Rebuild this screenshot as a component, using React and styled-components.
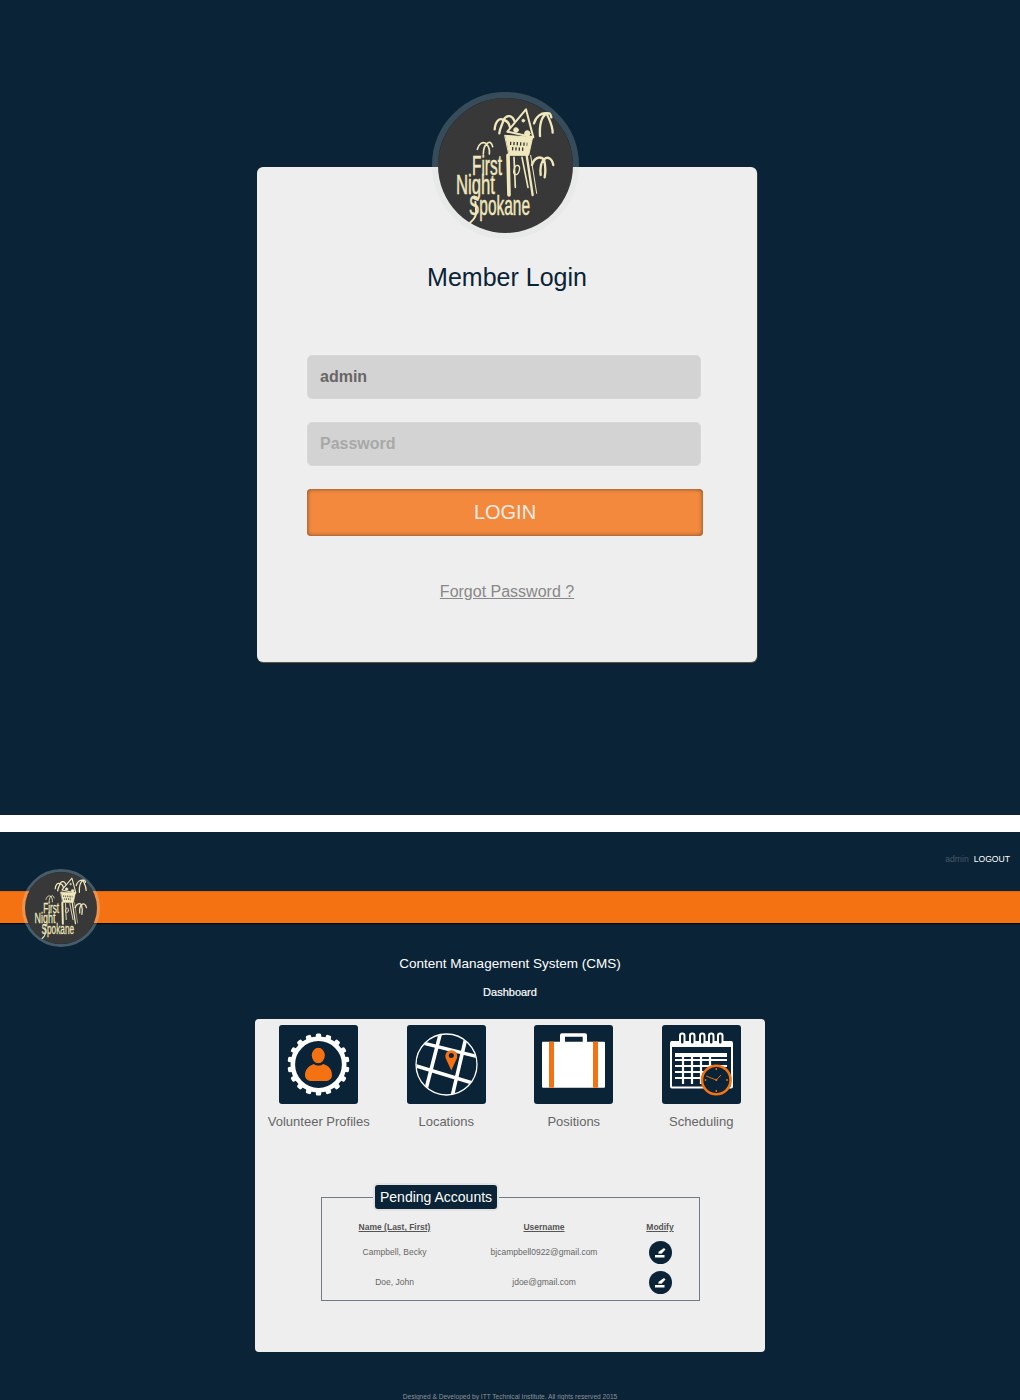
import styled, { createGlobalStyle } from 'styled-components';

const navy = '#0a2336';
const orange = '#f57212';
const cream = '#f0e8bd';

const GlobalStyle = createGlobalStyle`
  html, body {
    margin: 0;
    padding: 0;
    background: #fff;
    font-family: 'Liberation Sans', Arial, sans-serif;
  }
`;

const LogoRing = styled.div`
  position: absolute;
  left: ${(p) => p.$left}px;
  top: ${(p) => p.$top}px;
  width: ${(p) => p.$size}px;
  height: ${(p) => p.$size}px;
  border-radius: 50%;
  border: ${(p) => p.$ring}px solid rgba(215, 225, 225, ${(p) => p.$alpha});
  background-clip: padding-box;
  svg {
    display: block;
    width: 100%;
    height: 100%;
  }
`;

// drawn in the coordinates of the crop, that is why the group is scaled
const Logo = () => (
  <svg viewBox="0 0 135 135">
    <circle cx="67.5" cy="67.5" r="67.5" fill="#383838" />
    <g transform="translate(-18 -18) scale(.3333)" fill="none" stroke={cream} strokeLinecap="round" strokeLinejoin="round">
      <path d="M262 155 L318 88 L340 172 Z" strokeWidth="6" />
      <path d="M255 166 L338 172 L326 226 L268 226 Z" fill={cream} strokeWidth="3" />
      <path d="M270 190 L322 193 M276 206 L316 208" stroke="#383838" strokeWidth="10" strokeDasharray="4 6" strokeLinecap="butt" />
      <path d="M264 226 L267 345" strokeWidth="11" />
      <path d="M320 226 L338 345" strokeWidth="7" />
      <path d="M332 226 L350 340" strokeWidth="3" />
      <path d="M282 232 L286 322 M306 232 L324 322" strokeWidth="5" />
      <ellipse cx="290" cy="270" rx="8" ry="14" strokeWidth="4" transform="rotate(15 290 270)" />
      <g strokeWidth="3" fill={cream}>
        <circle cx="288" cy="150" r="7" />
        <circle cx="322" cy="160" r="8" />
        <circle cx="310" cy="122" r="4" />
      </g>
      <g strokeWidth="7">
        <path d="M250 120 C238 112 226 125 224 148 M250 120 C250 130 240 140 238 160 M250 120 C262 100 278 108 284 125 M250 120 C262 122 268 130 270 142" />
        <path d="M380 100 C365 98 348 108 342 130 M380 100 C362 112 358 135 360 168 M380 100 C388 120 398 135 398 158 M380 100 C388 98 392 100 394 112" />
        <path d="M372 238 C358 226 342 235 336 255 M372 238 C362 248 360 265 362 285 M372 238 C376 255 378 272 374 292 M372 238 C384 228 396 235 400 255" />
        <path d="M200 192 C188 182 176 192 172 208 M200 192 C190 200 190 212 190 222 M200 192 C206 200 210 210 208 222 M200 192 C208 182 215 188 218 200" strokeWidth="5" />
      </g>
      <path d="M166 366 C170 400 172 410 150 428" strokeWidth="6" />
    </g>
    <g fill={cream} stroke={cream} strokeWidth=".5" fontFamily="'Liberation Sans', sans-serif">
      <text x="34" y="77" fontSize="28" textLength="30" lengthAdjust="spacingAndGlyphs">First</text>
      <text x="18" y="96" fontSize="27" textLength="39" lengthAdjust="spacingAndGlyphs">Night</text>
      <text x="31" y="117" fontSize="28" textLength="61" lengthAdjust="spacingAndGlyphs">Spokane</text>
    </g>
  </svg>
);

const LoginScreen = styled.section`
  height: 815px;
  box-sizing: border-box;
  padding-top: 167px;
  background: ${navy};
`;

const LoginCard = styled.form`
  position: relative;
  box-sizing: border-box;
  width: 500px;
  height: 495px;
  margin-left: 257px;
  padding: 95px 0 0 50px;
  background: #eee;
  border-radius: 6px;
  box-shadow: 0.5px 1px 0 #59583f;
`;

const LoginTitle = styled.h1`
  margin: 0 0 63px -50px;
  font-size: 25px;
  line-height: 30px;
  font-weight: 400;
  text-align: center;
  color: ${navy};
`;

const TextInput = styled.input`
  display: block;
  box-sizing: border-box;
  width: 394px;
  height: 44px;
  margin-bottom: 23px;
  padding: 0 12px 1px;
  background: #d3d3d3;
  border: 1px solid #d8d8d8;
  border-radius: 5px;
  outline: none;
  font-family: 'Liberation Sans', sans-serif;
  font-size: 16px;
  font-weight: 700;
  color: #666;
  &::placeholder {
    color: #a8a8a8;
    opacity: 1;
  }
`;

const LoginButton = styled.button`
  display: block;
  box-sizing: border-box;
  width: 396px;
  height: 47px;
  padding: 0;
  background: #f2893d;
  border: none;
  border-radius: 4px;
  box-shadow: inset 0 0 4px rgba(60, 50, 40, 0.75);
  font-family: 'Liberation Sans', sans-serif;
  font-size: 20px;
  color: #f3ece4;
`;

const ForgotLink = styled.a`
  display: block;
  margin: 46px 0 0 -50px;
  font-size: 16px;
  line-height: 20px;
  text-align: center;
  text-decoration: underline;
  color: #888;
`;

const Gap = styled.div`
  height: 17px;
  background: #fff;
`;

const DashboardScreen = styled.section`
  position: relative;
  height: 568px;
  overflow: hidden;
  background: ${navy};
`;

const UserBar = styled.div`
  display: flex;
  justify-content: flex-end;
  align-items: center;
  gap: 5px;
  height: 59px;
  box-sizing: border-box;
  padding: 0 10px 5px 0;
  font-size: 8.6px;
`;

const UserName = styled.span`
  color: #48596a;
`;

const LogoutLink = styled.a`
  color: #fff;
`;

const Band = styled.div`
  height: 32px;
  background: ${orange};
  border-top: 1px solid #e0660f;
  box-sizing: border-box;
  box-shadow: 0 1px 1px #000;
`;

const PageTitle = styled.h1`
  margin: 32px 0 0;
  font-size: 13.5px;
  line-height: 18px;
  font-weight: 400;
  text-align: center;
  color: #fff;
`;

const PageSubtitle = styled.h2`
  margin: 12px 0 0;
  font-size: 11px;
  line-height: 14px;
  font-weight: 400;
  -webkit-text-stroke: 0.2px #fff;
  text-align: center;
  color: #fff;
`;

const Panel = styled.main`
  box-sizing: border-box;
  width: 510px;
  height: 333px;
  margin: 20px auto 0;
  padding-top: 6px;
  background: #eee;
  border-radius: 4px;
`;

const TileGrid = styled.div`
  display: grid;
  grid-template-columns: repeat(4, 1fr);
`;

const Tile = styled.a`
  display: flex;
  flex-direction: column;
  align-items: center;
  font-size: 13px;
  line-height: 16px;
  color: #666;
`;

const TileIcon = styled.svg`
  display: block;
  width: 79px;
  height: 79px;
  margin-bottom: 10px;
  border-radius: 3px;
  background: ${navy};
`;

const teeth = Array.from({ length: 18 }, (_, i) => i * 20);

const GearIcon = () => (
  <TileIcon viewBox="0 0 79 79">
    <g fill="#fff">
      {teeth.map((deg) => (
        <rect key={deg} x="36.8" y="8.500" width="5.400" height="7" rx="1.500" transform={`rotate(${deg} 39.5 39.5)`} />
      ))}
    </g>
    <circle cx="39.5" cy="39.5" r="25.700" fill="none" stroke="#fff" strokeWidth="4.600" />
    <ellipse cx="39.3" cy="30.5" rx="6.5" ry="7.800" fill={orange} />
    <path d="M26 50 C26 43 32 40 35 39 C37 41 42 41 44 39 C48 40 53 43 53 50 C53 54 50 56 46 56 L33 56 C29 56 26 54 26 50 Z" fill={orange} />
  </TileIcon>
);

const GlobeIcon = () => (
  <TileIcon viewBox="0 0 79 79">
    <defs>
      <clipPath id="globe">
        <circle cx="39.5" cy="39.5" r="30" />
      </clipPath>
    </defs>
    <g clipPath="url(#globe)" stroke="#fff" strokeWidth="3.600">
      <path d="M8 16 L72 32 M6 40 L72 60 M34 6 L17 72 M60 8 L45 72" />
    </g>
    <circle cx="39.5" cy="39.5" r="30.500" fill="none" stroke="#fff" strokeWidth="1.300" />
    <path d="M44.3 45.5 L38.6 33 A6 6 0 1 1 50 33 Z" fill={orange} />
    <circle cx="44.3" cy="30.5" r="2.500" fill={navy} />
  </TileIcon>
);

const CaseIcon = () => (
  <TileIcon viewBox="0 0 79 79">
    <path d="M26 17 L26 10 Q26 8.3 28 8.3 L51 8.3 Q53 8.3 53 10 L53 17 L48.700 17 L48.700 11.700 L31 11.700 L31 17 Z" fill="#fff" />
    <rect x="8" y="16.700" width="63" height="46" rx="1" fill="#fff" />
    <rect x="15" y="16.700" width="5" height="46" fill={orange} />
    <rect x="59" y="16.700" width="5" height="46" fill={orange} />
  </TileIcon>
);

const ringX = [20, 30, 40, 49, 58];
const rowY = [35, 41, 47, 53];
const colX = [21, 30, 39, 48];

const CalendarIcon = () => (
  <TileIcon viewBox="0 0 79 79">
    <rect x="9" y="17" width="61" height="45.500" rx="1" fill="none" stroke="#fff" strokeWidth="2" />
    <rect x="9" y="16" width="61" height="6" rx="1" fill="#fff" />
    {ringX.map((x) => (
      <rect key={x} x={x - 2} y="8.500" width="4.500" height="11" rx="2.200" fill={navy} stroke="#fff" strokeWidth="2" />
    ))}
    <rect x="13" y="28" width="52" height="4" fill="#fff" />
    <g stroke="#fff" strokeWidth="2.200">
      {rowY.map((y) => (
        <path key={y} d={`M13 ${y} L${y > 41 ? 52 : 65} ${y}`} />
      ))}
      {colX.map((x) => (
        <path key={x} d={`M${x} 30 L${x} 59`} />
      ))}
    </g>
    <circle cx="54.300" cy="55" r="14.300" fill={navy} stroke={orange} strokeWidth="2.600" />
    <g fill={orange}>
      <circle cx="54.300" cy="55" r="1.100" />
      <circle cx="54.300" cy="44" r=".9" />
      <circle cx="54.300" cy="66" r=".9" />
      <circle cx="43.500" cy="55" r=".9" />
      <circle cx="65" cy="55" r=".9" />
    </g>
    <path d="M54.300 55 L44 51 M54.300 55 L59 50" stroke={orange} strokeWidth=".9" />
  </TileIcon>
);

const tiles = [
  { label: 'Volunteer Profiles', Icon: GearIcon },
  { label: 'Locations', Icon: GlobeIcon },
  { label: 'Positions', Icon: CaseIcon },
  { label: 'Scheduling', Icon: CalendarIcon },
];

const PendingBox = styled.fieldset`
  box-sizing: border-box;
  width: 379px;
  height: 116px;
  margin: 55px 0 0 66px;
  padding: 0;
  border: 1px solid #6f7c87;
`;

const PendingTitle = styled.legend`
  box-sizing: border-box;
  width: 122px;
  height: 24px;
  margin-left: 53px;
  padding: 0 5px;
  background: ${navy};
  border-radius: 3px;
  box-shadow: 0 0 0 2px #e2e2e2;
  font-size: 14px;
  line-height: 24px;
  white-space: nowrap;
  color: #fff;
`;

const PendingTable = styled.table`
  width: 100%;
  margin-top: 8px;
  border-collapse: collapse;
  table-layout: fixed;
  font-size: 8.500px;
  color: #666;
`;

const HeadCell = styled.th`
  width: ${(p) => p.$width}px;
  height: 20px;
  padding: 0;
  font-weight: 700;
  text-decoration: underline;
  color: #555;
`;

const Cell = styled.td`
  height: 30px;
  padding: 0;
  text-align: center;
`;

const ModifyButton = styled.button`
  display: block;
  width: 23px;
  height: 23px;
  margin: 0 auto;
  padding: 0;
  border: none;
  border-radius: 50%;
  background: ${navy};
  svg {
    display: block;
  }
`;

const EditIcon = () => (
  <svg width="23" height="23" viewBox="0 0 23 23">
    <rect x="6" y="14" width="9.500" height="2.500" fill="#fff" />
    <path d="M9 12.500 L10 10.500 L15 7 L16.500 8.500 L12.500 12.800 Z" fill="#fff" />
  </svg>
);

const accounts = [
  { name: 'Campbell, Becky', username: 'bjcampbell0922@gmail.com' },
  { name: 'Doe, John', username: 'jdoe@gmail.com' },
];

const Footer = styled.footer`
  margin-top: 40px;
  font-size: 6.600px;
  line-height: 10px;
  text-align: center;
  color: #8d9296;
`;

const App = () => (
  <>
    <GlobalStyle />
    <LoginScreen>
      <LoginCard>
        <LogoRing $left={175} $top={-75} $size={135} $ring={6} $alpha={0.22}>
          <Logo />
        </LogoRing>
        <LoginTitle>Member Login</LoginTitle>
        <TextInput defaultValue="admin" />
        <TextInput type="password" placeholder="Password" />
        <LoginButton type="button">LOGIN</LoginButton>
        <ForgotLink>Forgot Password ?</ForgotLink>
      </LoginCard>
    </LoginScreen>
    <Gap />
    <DashboardScreen>
      <UserBar>
        <UserName>admin</UserName>
        <LogoutLink>LOGOUT</LogoutLink>
      </UserBar>
      <Band />
      <LogoRing $left={22} $top={37} $size={72} $ring={3.500} $alpha={0.3}>
        <Logo />
      </LogoRing>
      <PageTitle>Content Management System (CMS)</PageTitle>
      <PageSubtitle>Dashboard</PageSubtitle>
      <Panel>
        <TileGrid>
          {tiles.map(({ label, Icon }) => (
            <Tile key={label}>
              <Icon />
              {label}
            </Tile>
          ))}
        </TileGrid>
        <PendingBox>
          <PendingTitle>Pending Accounts</PendingTitle>
          <PendingTable>
            <thead>
              <tr>
                <HeadCell $width={145}>Name (Last, First)</HeadCell>
                <HeadCell $width={154}>Username</HeadCell>
                <HeadCell $width={78}>Modify</HeadCell>
              </tr>
            </thead>
            <tbody>
              {accounts.map((el) => (
                <tr key={el.username}>
                  <Cell>{el.name}</Cell>
                  <Cell>{el.username}</Cell>
                  <Cell>
                    <ModifyButton type="button">
                      <EditIcon />
                    </ModifyButton>
                  </Cell>
                </tr>
              ))}
            </tbody>
          </PendingTable>
        </PendingBox>
      </Panel>
      <Footer>Designed &amp; Developed by ITT Technical Institute. All rights reserved 2015</Footer>
    </DashboardScreen>
  </>
);

export default App;
